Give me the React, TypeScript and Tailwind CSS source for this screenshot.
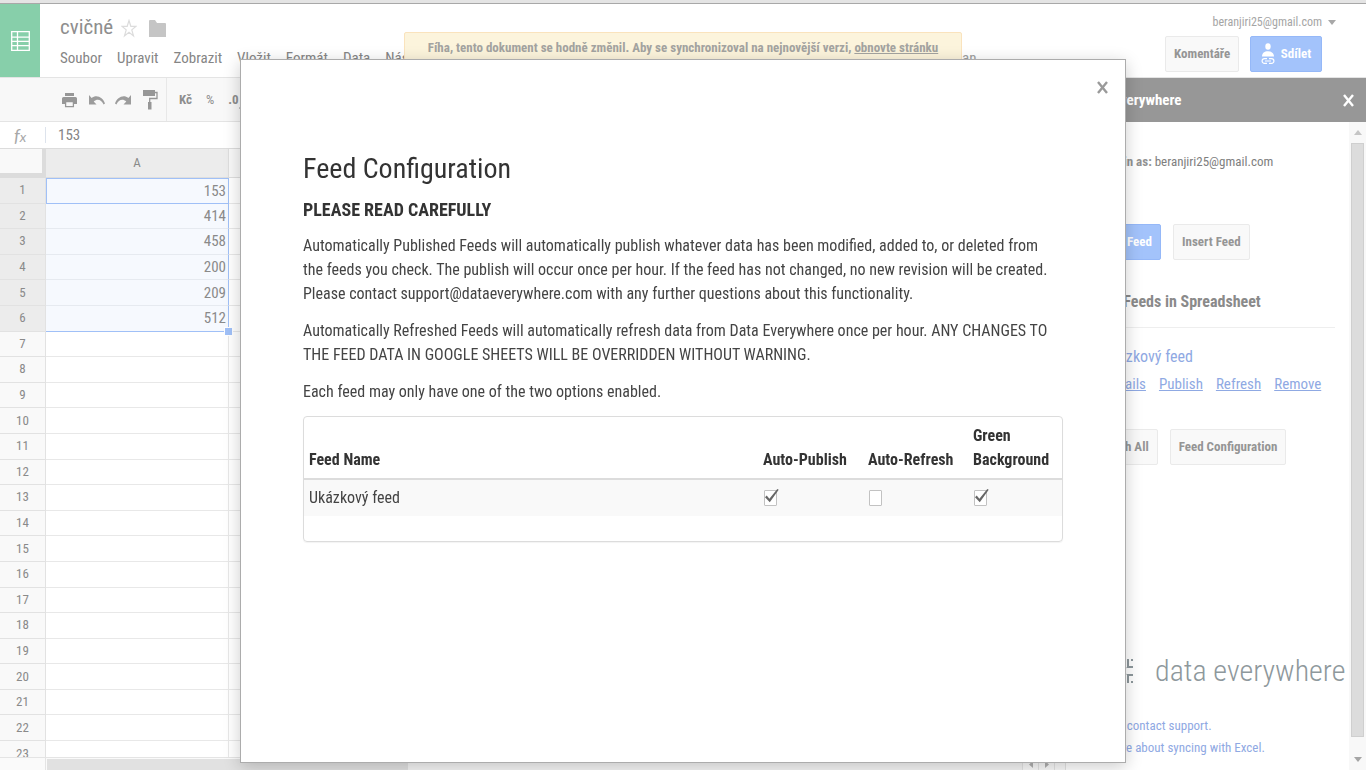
import React, { useState } from "react";

const menus = ["Soubor", "Upravit", "Zobrazit", "Vložit", "Formát", "Data", "Nástroje"];
const values = ["153", "414", "458", "200", "209", "512"];
const rows = Array.from({ length: 23 }, (_, i) => i + 1);

function SheetIcon() {
  return (
    <svg width="19" height="20" viewBox="0 0 19 20" fill="none" stroke="#fff" strokeWidth="1.3" aria-hidden="true">
      <path d="M.7.7h17.6v18.6H.7zM.7 6.2h17.6M.7 10.3h17.6M.7 14.6h17.6M6.5.7v18.6" />
    </svg>
  );
}

function PrintIcon() {
  return (
    <svg width="15" height="16" viewBox="0 0 15 16" aria-hidden="true">
      <path fill="#979797" d="M3 1h9v3H3zM1.5 5h12Q15 5 15 6.5V12h-3V9H3v3H0V6.500Q0 5 1.500 5z" />
      <path fill="none" stroke="#979797" strokeWidth="1.3" d="M3.600 9.600h7.800v5H3.600z" />
    </svg>
  );
}

function UndoIcon({ flip = false }: { flip?: boolean }) {
  return (
    <svg width="16" height="10" viewBox="0 0 16 10" aria-hidden="true">
      <path
        fill="#9c9c9c"
        d={
          flip
            ? "M16 0v9.500H8.500L11.300 6.400C7.600 3.200 3.500 4.600 1.400 9.600L0 8.600C2 2.300 8.500-1 13.400 3z"
            : "M0 0v9.500h7.500L4.700 6.400c3.700-3.200 7.800-1.800 9.900 3.200l1.400-1C14 2.300 7.500-1 2.600 3z"
        }
      />
    </svg>
  );
}

function PaintIcon() {
  return (
    <svg width="15" height="20" viewBox="0 0 15 20" aria-hidden="true">
      <path fill="#979797" d="M0 0h12v6H0zM5 12h3.500v7.500H5z" />
      <path fill="none" stroke="#979797" strokeWidth="1.300" d="M12 2.500h2v6H6.700V13" />
    </svg>
  );
}

function ShareIcon() {
  return (
    <svg width="14" height="22" viewBox="0 0 14 22" aria-hidden="true">
      <ellipse cx="7" cy="3.500" rx="2.700" ry="3.300" fill="#fff" />
      <path fill="#fff" d="M1 13.500C1 10 3.500 8.200 7 8.200S13 10 13 13.500z" />
      <path fill="none" stroke="#fff" strokeWidth="1.200" d="M6 15.600H3.500a2.300 2.300 0 000 4.800H6M8 15.600h2.500a2.300 2.300 0 010 4.800H8M4 18h6" />
    </svg>
  );
}

function CloseIcon({ className }: { className: string }) {
  return (
    <svg width="11" height="13" viewBox="0 0 11 13" className={className} fill="none" stroke="currentColor" strokeWidth="2.400" aria-hidden="true">
      <path d="M1 1l9 11M10 1L1 12" />
    </svg>
  );
}

function GrayButton({ children }: { children: React.ReactNode }) {
  return (
    <button className="h-9 shrink-0 rounded-[2px] border border-[#eaeaea] bg-[#f9f9f9] px-2 text-[13px] font-bold text-[#959595]">
      {children}
    </button>
  );
}

function Tick({ label, initial }: { label: string; initial: boolean }) {
  const [on, setOn] = useState(initial);
  return (
    <span className="relative block h-4 w-4">
      <input
        type="checkbox"
        aria-label={label}
        checked={on}
        onChange={() => setOn(!on)}
        className="block h-4 w-[13px] appearance-none rounded-[1px] border border-[#c2c2c2] bg-white"
      />
      {on && (
        <svg className="pointer-events-none absolute -top-px left-px" width="14" height="14" viewBox="0 0 14 14" aria-hidden="true">
          <path d="M0 8.300L1.700 6.500 4.400 9.700 12.300 0 13.700.8 4.800 13.200z" fill="#666" />
        </svg>
      )}
    </span>
  );
}

function Header() {
  return (
    <header className="flex h-[73px] shrink-0 bg-white">
      <div className="flex w-10 shrink-0 items-center justify-center bg-[#87cfaa]">
        <SheetIcon />
      </div>
      <div className="min-w-0 flex-1 pl-5 pt-2">
        <div className="flex h-8 items-center">
          <h1 className="text-[21px] text-[#8e8e8e]">cvičné</h1>
          <svg className="ml-2" width="16" height="19" viewBox="0 0 16 19" fill="none" stroke="#dcdcdc" strokeWidth="1.200" aria-hidden="true">
            <path d="M8 1.500l1.800 5.800h5.300l-4.300 3.600 1.700 6L8 13.300l-4.500 3.600 1.700-6L.9 7.300h5.300z" />
          </svg>
          <svg className="ml-3" width="17" height="17" viewBox="0 0 17 17" aria-hidden="true">
            <path fill="#c5c5c5" d="M1 0h5l2 3h8q1 0 1 1v13H0V1q0-1 1-1z" />
          </svg>
        </div>
        <nav className="mt-1 flex gap-[15px] text-[15px] leading-5 text-[#858585]">
          {menus.map((m) => (
            <button key={m}>{m}</button>
          ))}
        </nav>
      </div>
      <div className="flex w-[201px] shrink-0 flex-col pt-2">
        <button className="flex h-5 items-center gap-1.5 self-end pr-[30px] text-xs text-[#a5a5a5]">
          beranjiri25@gmail.com
          <svg width="8" height="5" viewBox="0 0 8 5" aria-hidden="true">
            <path d="M0 0h8L4 5z" fill="#a8a8a8" />
          </svg>
        </button>
        <div className="mt-1 flex justify-between pr-11">
          <GrayButton>Komentáře</GrayButton>
          <button className="flex h-9 w-[72px] items-center justify-center gap-1.5 rounded-[2px] border border-[#95b8f8] bg-[#a3c3fb] text-[13px] font-bold text-white">
            <ShareIcon />
            Sdílet
          </button>
        </div>
      </div>
    </header>
  );
}

function Sheet() {
  return (
    <section className="flex min-w-0 flex-1 flex-col">
      <div className="flex h-11 shrink-0 items-center border-b border-[#e4e4e4] bg-[#f8f8f8] pl-[62px] text-[13px] text-[#8e8e8e]">
        <button aria-label="Tisk"><PrintIcon /></button>
        <button aria-label="Zpět" className="ml-3"><UndoIcon /></button>
        <button aria-label="Znovu" className="ml-2.5"><UndoIcon flip /></button>
        <button aria-label="Formát" className="ml-3"><PaintIcon /></button>
        <span className="ml-2 h-full w-px bg-[#e8e8e8]" />
        <button className="ml-3 font-bold">Kč</button>
        <button className="ml-3.5">%</button>
        <button className="ml-3.5 flex items-center font-bold">
          .0
          <svg className="mt-4" width="6" height="6" viewBox="0 0 6 6" aria-hidden="true">
            <path d="M3 0v6L0 3zM3 2h3v2H3z" fill="#8e8e8e" />
          </svg>
        </button>
      </div>
      <div className="flex h-[27px] shrink-0 items-center border-b border-[#dcdcdc] bg-white">
        <span className="w-[45px] pl-[14px] font-[Lato] text-lg italic leading-6 text-[#a8a8a8]">
          f<span className="text-sm">x</span>
        </span>
        <label className="flex h-4 items-center border-l border-[#dde3ec] pl-3 text-[15px] leading-4 text-[#858585]">
          <input aria-label="Vzorec" defaultValue="153" className="w-40 bg-transparent leading-4 outline-none" />
        </label>
      </div>
      <div className="min-h-0 flex-1 overflow-hidden bg-white">
        <table className="h-[618px] w-full table-fixed border-separate border-spacing-0 text-[#8a8a8a]">
          <colgroup>
            <col className="w-[46px]" />
            <col className="w-[183px]" />
            <col />
          </colgroup>
          <thead>
            <tr className="h-[29px]">
              <th className="border-b-[5px] border-r-4 border-[#dcdcdc] bg-[#f9f9f9]" />
              <th className="border-b border-r border-[#dedede] bg-[#ececec] p-0 text-[13px] font-normal leading-5">A</th>
              <th className="border-b border-[#dedede] bg-[#f8f8f8]" />
            </tr>
          </thead>
          <tbody>
            {rows.map((n, i) => (
              <tr key={n} className="h-[25px]">
                <th className={`border-b border-r border-[#e2e2e2] p-0 text-[13px] font-normal leading-4 ${i < 6 ? "bg-[#ececec]" : "bg-[#f9f9f9]"}`}>
                  {n}
                </th>
                <td
                  className={`relative p-0 pr-0.5 text-right text-[15px] leading-4 ${
                    i === 0
                      ? "border border-[#a0c0f7] bg-[#f6f9fe]"
                      : i === 5
                        ? "border-b border-r border-[#a0c0f7] bg-[#f6f9fe]"
                        : i < 5
                          ? "border-b border-r border-b-[#e6eaf0] border-r-[#a0c0f7] bg-[#f6f9fe]"
                          : "border-b border-r border-[#e8e8e8]"
                  }`}
                >
                  {values[i]}
                  {i === 5 && <span className="absolute -bottom-1 -right-1 z-10 h-[7px] w-[7px] bg-[#a0c0f7] ring-1 ring-white" />}
                </td>
                <td className="border-b border-[#e8e8e8]" />
              </tr>
            ))}
          </tbody>
        </table>
      </div>
      <div className="flex h-[13px] shrink-0 border-t border-[#e4e4e4] bg-[#fafafa]">
        <span className="mr-px w-[46px] border-r border-[#e4e4e4]" />
        <span className="mt-px w-[361px] bg-[#e1e1e1]" />
        <span className="mt-px flex-1 bg-[#f4f4f4]" />
        <button aria-label="Doleva" className="flex w-4 items-center justify-center border-l border-[#e4e4e4]">
          <svg width="4" height="7" viewBox="0 0 4 7"><path d="M4 0v7L0 3.500z" fill="#b0b0b0" /></svg>
        </button>
        <button aria-label="Doprava" className="flex w-4 items-center justify-center border-l border-[#e4e4e4]">
          <svg width="4" height="7" viewBox="0 0 4 7"><path d="M0 0v7l4-3.500z" fill="#b0b0b0" /></svg>
        </button>
        <span className="w-3 border-x border-[#e4e4e4]" />
      </div>
    </section>
  );
}

function Sidebar() {
  return (
    <aside className="flex w-[300px] shrink-0 flex-col bg-white">
      <div className="flex h-11 shrink-0 items-center justify-between bg-[#979797] pl-4 pr-3 text-[15px] font-bold text-white">
        Data Everywhere
        <button aria-label="Zavřít"><CloseIcon className="text-white" /></button>
      </div>
      <div className="flex min-h-0 flex-1">
        <div className="flex min-w-0 flex-1 flex-col pl-4">
          <p className="pt-[30px] text-[13px] leading-5 text-[#7e7e7e]">
            <b className="text-[#929292]">Logged in as:</b> beranjiri25@gmail.com
          </p>
          <div className="mt-[52px] flex gap-3">
            <button className="h-9 w-[79px] rounded-[2px] border border-[#95b8f8] bg-[#a3c3fb] text-right text-[13px] font-bold text-white">
              <span className="pr-2">New Feed</span>
            </button>
            <GrayButton>Insert Feed</GrayButton>
          </div>
          <div className="mr-[14px] mt-[30px] border-b border-[#eeeeee] pb-[13px]">
            <h2 className="pl-5 text-base font-bold leading-6 text-[#8a8a8a]">All Feeds in Spreadsheet</h2>
          </div>
          <p className="mt-[17px] pl-5 text-base leading-6 text-[#8fa9e3]">Ukázkový feed</p>
          <p className="mt-[3px] flex gap-[13px] pl-[23px] text-[15px] leading-6 text-[#8fa9e3]">
            <a href="#details" className="underline">Details</a>
            <a href="#publish" className="underline">Publish</a>
            <a href="#refresh" className="underline">Refresh</a>
            <a href="#remove" className="underline">Remove</a>
          </p>
          <div className="mt-[33px] flex gap-3">
            <GrayButton>Refresh All</GrayButton>
            <GrayButton>Feed Configuration</GrayButton>
          </div>
          <div className="mt-auto flex h-12 items-center gap-[22px] pl-[29px]">
            <svg className="shrink-0" width="22" height="26" viewBox="0 0 22 26" fill="none" stroke="#8e989c" strokeWidth="2" aria-hidden="true">
              <path d="M3 5v6l5 2-5 2v6M17 1v8h5M15 9l-4 4 4 4M17 25v-8h5M20 2h2M20 24h2" />
            </svg>
            <span className="whitespace-nowrap font-['Roboto_Condensed_Light','Roboto_Condensed','Liberation_Sans',sans-serif] text-[30px] leading-10 text-[#8e989c]">data everywhere</span>
          </div>
          <p className="mt-5 pl-0.5 text-[13px] leading-[22px] text-[#8fa9e3]">
            <a href="#support">FAQs or contact support.</a>
            <br />
            <a href="#excel">See more about syncing with Excel.</a>
          </p>
          <div className="h-[11px] shrink-0" />
        </div>
        <div className="flex w-[17px] shrink-0 flex-col items-center bg-[#f8f8f8]">
          <svg className="my-2 shrink-0" width="8" height="5" viewBox="0 0 8 5"><path d="M0 5h8L4 0z" fill="#c5c5c5" /></svg>
          <span className="w-[13px] flex-1 border border-[#cfcfcf] bg-[#dcdcdc]" />
          <svg className="mb-2 mt-5 shrink-0" width="8" height="5" viewBox="0 0 8 5"><path d="M0 0h8L4 5z" fill="#a5a5a5" /></svg>
        </div>
      </div>
    </aside>
  );
}

function Dialog() {
  return (
    <div className="fixed inset-0 z-20 flex items-start justify-center pt-[59px]">
      <div role="dialog" aria-labelledby="dialog-title" className="relative w-full max-w-[886px] border border-[#acacac] bg-white px-[62px] pb-[220px] pt-[93px] text-base leading-6 text-[#444] shadow-[0_4px_16px_rgba(0,0,0,0.2)]">
        <button aria-label="Close" className="absolute right-[17px] top-[21px]">
          <CloseIcon className="text-[#9a9a9a]" />
        </button>
        <h1 id="dialog-title" className="text-[28px] leading-8 text-[#333]">Feed Configuration</h1>
        <p className="mt-[13px] text-lg font-bold leading-6 text-[#333]">PLEASE READ CAREFULLY</p>
        <p className="mt-3">
          Automatically Published Feeds will automatically publish whatever data has been modified, added to, or deleted from
          <br />
          the feeds you check. The publish will occur once per hour. If the feed has not changed, no new revision will be
          created. Please contact support@dataeverywhere.com with any further questions about this functionality.
        </p>
        <p className="mt-[13px]">
          Automatically Refreshed Feeds will automatically refresh data from Data Everywhere once per hour. ANY CHANGES TO
          THE FEED DATA IN GOOGLE SHEETS WILL BE OVERRIDDEN WITHOUT WARNING.
        </p>
        <p className="mt-[13px]">Each feed may only have one of the two options enabled.</p>
        <div className="mt-3 rounded-[4px] border border-[#dcdcdc] pb-[25px] shadow-[0_1px_1px_rgba(0,0,0,0.05)]">
          <table className="w-full table-fixed text-left">
            <colgroup>
              <col />
              <col className="w-[105px]" />
              <col className="w-[105px]" />
              <col className="w-[95px]" />
            </colgroup>
            <thead>
              <tr className="border-b-2 border-[#dcdcdc] align-bottom text-[#333]">
                <th className="px-[5px] pb-1.5 pt-[7px]">Feed Name</th>
                <th className="px-1.5 pb-1.5 pt-[7px]">Auto-Publish</th>
                <th className="px-1.5 pb-1.5 pt-[7px]">Auto-Refresh</th>
                <th className="px-1.5 pb-1.5 pt-[7px]">Green Background</th>
              </tr>
            </thead>
            <tbody>
              <tr className="bg-[#f9f9f9]">
                <td className="px-[5px] py-1.5">Ukázkový feed</td>
                <td className="px-[7px]"><Tick label="Auto-Publish" initial={true} /></td>
                <td className="px-[7px]"><Tick label="Auto-Refresh" initial={false} /></td>
                <td className="px-[7px]"><Tick label="Green Background" initial={true} /></td>
              </tr>
            </tbody>
          </table>
        </div>
      </div>
    </div>
  );
}

export default function App() {
  return (
    <div className="relative flex h-screen flex-col overflow-hidden bg-white font-['Roboto_Condensed','Liberation_Sans',sans-serif]">
      <div className="h-1 shrink-0 border-b border-[#a8a8a8] bg-[#e4e4e4]" />
      <Header />
      <div className="flex min-h-0 flex-1 border-t border-[#e4e4e4]">
        <Sheet />
        <Sidebar />
      </div>
      <div role="status" className="absolute left-[404px] top-8 z-10 flex h-8 w-[558px] items-center justify-center rounded-[2px] border border-[#fae3bd] bg-[#fcf4dc] text-[13px] font-bold text-[#a3a3a0]">
        <span>
          Fíha, tento dokument se hodně změnil. Aby se synchronizoval na nejnovější verzi,{" "}
          <a href="#refresh" className="underline">obnovte stránku</a>
        </span>
      </div>
      <span className="absolute left-[962px] top-12 text-[15px] leading-5 text-[#a0a0a0]">an</span>
      <Dialog />
    </div>
  );
}
